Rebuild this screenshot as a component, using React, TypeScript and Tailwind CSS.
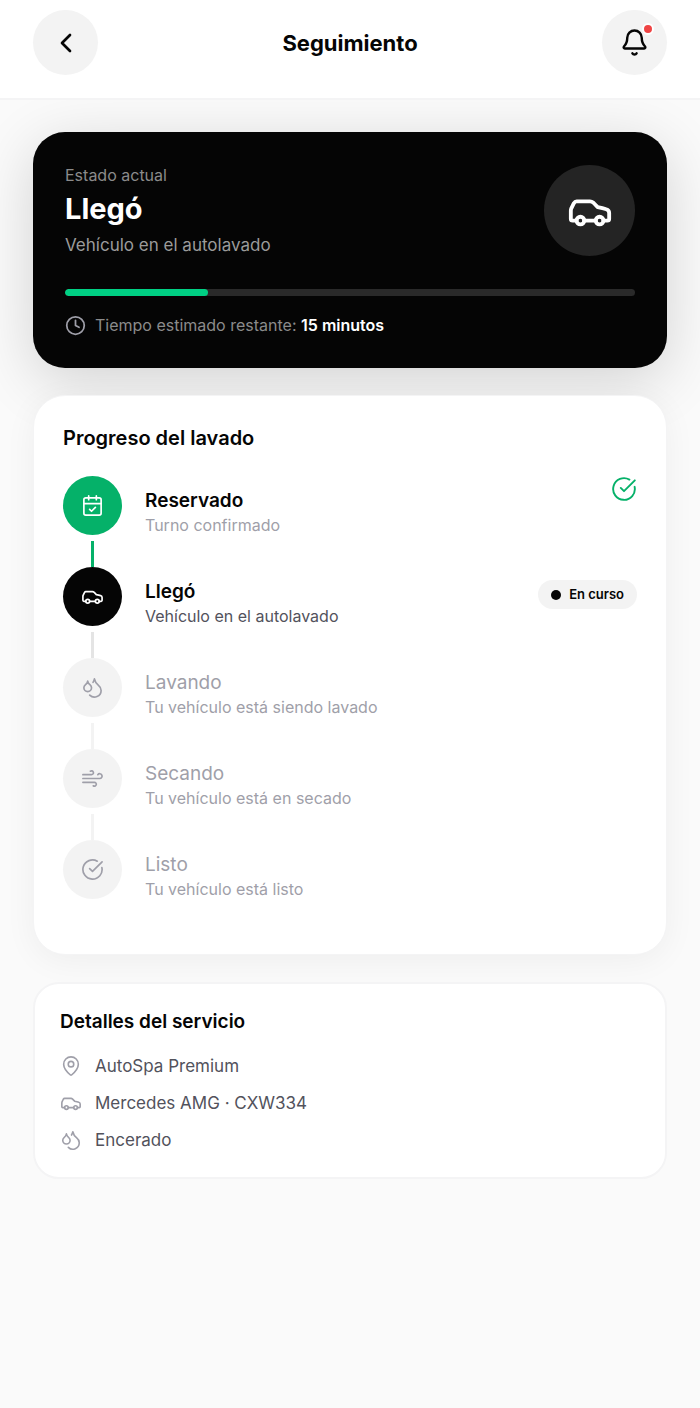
import {
  Bell,
  CalendarCheck,
  Car,
  ChevronLeft,
  CircleCheckBig,
  Clock,
  Droplets,
  MapPin,
  Wind,
} from 'lucide-react';

const steps = [
  { title: 'Reservado', text: 'Turno confirmado', icon: CalendarCheck, state: 'done' },
  { title: 'Llegó', text: 'Vehículo en el autolavado', icon: Car, state: 'current' },
  { title: 'Lavando', text: 'Tu vehículo está siendo lavado', icon: Droplets, state: 'pending' },
  { title: 'Secando', text: 'Tu vehículo está en secado', icon: Wind, state: 'pending' },
  { title: 'Listo', text: 'Tu vehículo está listo', icon: CircleCheckBig, state: 'pending' },
];

const details = [
  { icon: MapPin, text: 'AutoSpa Premium' },
  { icon: Car, text: 'Mercedes AMG · CXW334' },
  { icon: Droplets, text: 'Encerado' },
];

const progress = 25;

export default function App() {
  return (
    <div className="min-h-screen bg-[#fafafa] font-['Inter',sans-serif] text-[#050505]">
      {/* Header */}
      <header className="relative z-10 flex items-center justify-between border-b-2 border-[#f4f4f5] bg-white px-[33px] pt-[10px] pb-[23px]">
        <button
          type="button"
          aria-label="Volver"
          className="flex size-[65px] items-center justify-center rounded-full bg-[#f3f3f3]"
        >
          <ChevronLeft size={32} strokeWidth={2} />
        </button>
        <h1 className="text-[22px] leading-8 font-bold">Seguimiento</h1>
        <button
          type="button"
          aria-label="Notificaciones"
          className="relative flex size-[65px] items-center justify-center rounded-full bg-[#f3f3f3]"
        >
          <Bell size={29} strokeWidth={2} />
          <span className="absolute top-[13px] right-[13px] size-3 rounded-full border-2 border-white bg-[#ef4444]" />
        </button>
      </header>

      <main className="flex flex-col gap-[27px] px-[33px] py-8">
        {/* Current status */}
        <section className="rounded-[32px] bg-[#050505] px-8 pt-[33px] pb-[31px] text-[#8b8b8b] shadow-[0_13px_60px_rgba(0,0,0,0.16)]">
          <div className="flex items-start justify-between">
            <div>
              <p className="text-[16px] leading-5">Estado actual</p>
              <h2 className="mt-1 text-[29px] leading-10 font-bold text-white">Llegó</h2>
              <p className="mt-1 text-[17px] leading-6 text-[#9b9b9b]">Vehículo en el autolavado</p>
            </div>
            <div className="flex size-[91px] items-center justify-center rounded-full bg-[#242424] text-white">
              <Car size={46} strokeWidth={2} />
            </div>
          </div>
          <div className="mt-8 h-[7px] overflow-hidden rounded-full bg-[#2a2a2a]">
            <div className="h-full rounded-full bg-[#00d084]" style={{ width: `${progress}%` }} />
          </div>
          <div className="mt-[17px] flex items-center gap-[9px]">
            <Clock size={21} strokeWidth={2} className="text-[#9f9fa9]" />
            <p className="text-[16px] leading-6">
              Tiempo estimado restante: <strong className="font-semibold text-white">15 minutos</strong>
            </p>
          </div>
        </section>

        {/* Wash progress */}
        <section className="relative rounded-[32px] border border-[#f4f4f5] bg-white px-[29px] pt-7 pb-[23px] shadow-[0_6px_32px_rgba(0,0,0,0.05)]">
          <h2 className="text-[20px] leading-7 font-semibold">Progreso del lavado</h2>
          <ol className="mt-6">
            {steps.map((step, i) => (
              <li key={step.title} className="flex items-start gap-[23px]">
                <div className="flex h-[91px] flex-col items-center">
                  <div
                    className={`flex size-[59px] items-center justify-center rounded-full ${
                      step.state === 'done' ? 'bg-[#05b169] text-white' :
                      step.state === 'current' ? 'bg-[#050505] text-white' :
                      'bg-[#f3f3f3] text-[#9f9fa9]'
                    }`}
                  >
                    <step.icon size={23} strokeWidth={1.75} />
                  </div>
                  {i < steps.length - 1 && (
                    <div
                      className={`mt-[6px] h-[26px] w-[3px] ${
                        step.state === 'done' ? 'bg-[#05b169]' :
                        step.state === 'current' ? 'bg-[#e4e4e4]' :
                        'bg-[#f3f3f3]'
                      }`}
                    />
                  )}
                </div>
                <div className="flex-1 pt-[13px]">
                  <h3
                    className={`text-[19px] leading-6 ${
                      step.state === 'pending' ? 'text-[#9f9fa9]' : 'font-semibold'
                    }`}
                  >
                    {step.title}
                  </h3>
                  <p
                    className={`text-[16px] leading-6 ${
                      step.state === 'current' ? 'text-[#52525c]' : 'text-[#9f9fa9]'
                    }`}
                  >
                    {step.text}
                  </p>
                </div>
                {step.state === 'done' && (
                  <CircleCheckBig size={26} strokeWidth={1.75} className="text-[#05b169]" />
                )}
                {step.state === 'current' && (
                  <span className="mt-[13px] flex h-[29px] items-center gap-2 rounded-full bg-[#f3f3f3] px-[13px] text-[13px] font-semibold">
                    <span className="size-[10px] rounded-full bg-[#050505]" />
                    En curso
                  </span>
                )}
              </li>
            ))}
          </ol>
        </section>

        {/* Service details */}
        <section className="relative rounded-[26px] border-2 border-[#f4f4f5] bg-white px-[25px] pt-6 pb-[25px]">
          <h2 className="text-[19px] leading-7 font-semibold">Detalles del servicio</h2>
          <ul className="mt-[18px] flex flex-col gap-[13px]">
            {details.map((detail) => (
              <li key={detail.text} className="flex items-center gap-[13px] text-[17px] leading-6 text-[#52525c]">
                <detail.icon size={22} strokeWidth={1.75} className="text-[#9f9fa9]" />
                {detail.text}
              </li>
            ))}
          </ul>
        </section>
      </main>
    </div>
  );
}
